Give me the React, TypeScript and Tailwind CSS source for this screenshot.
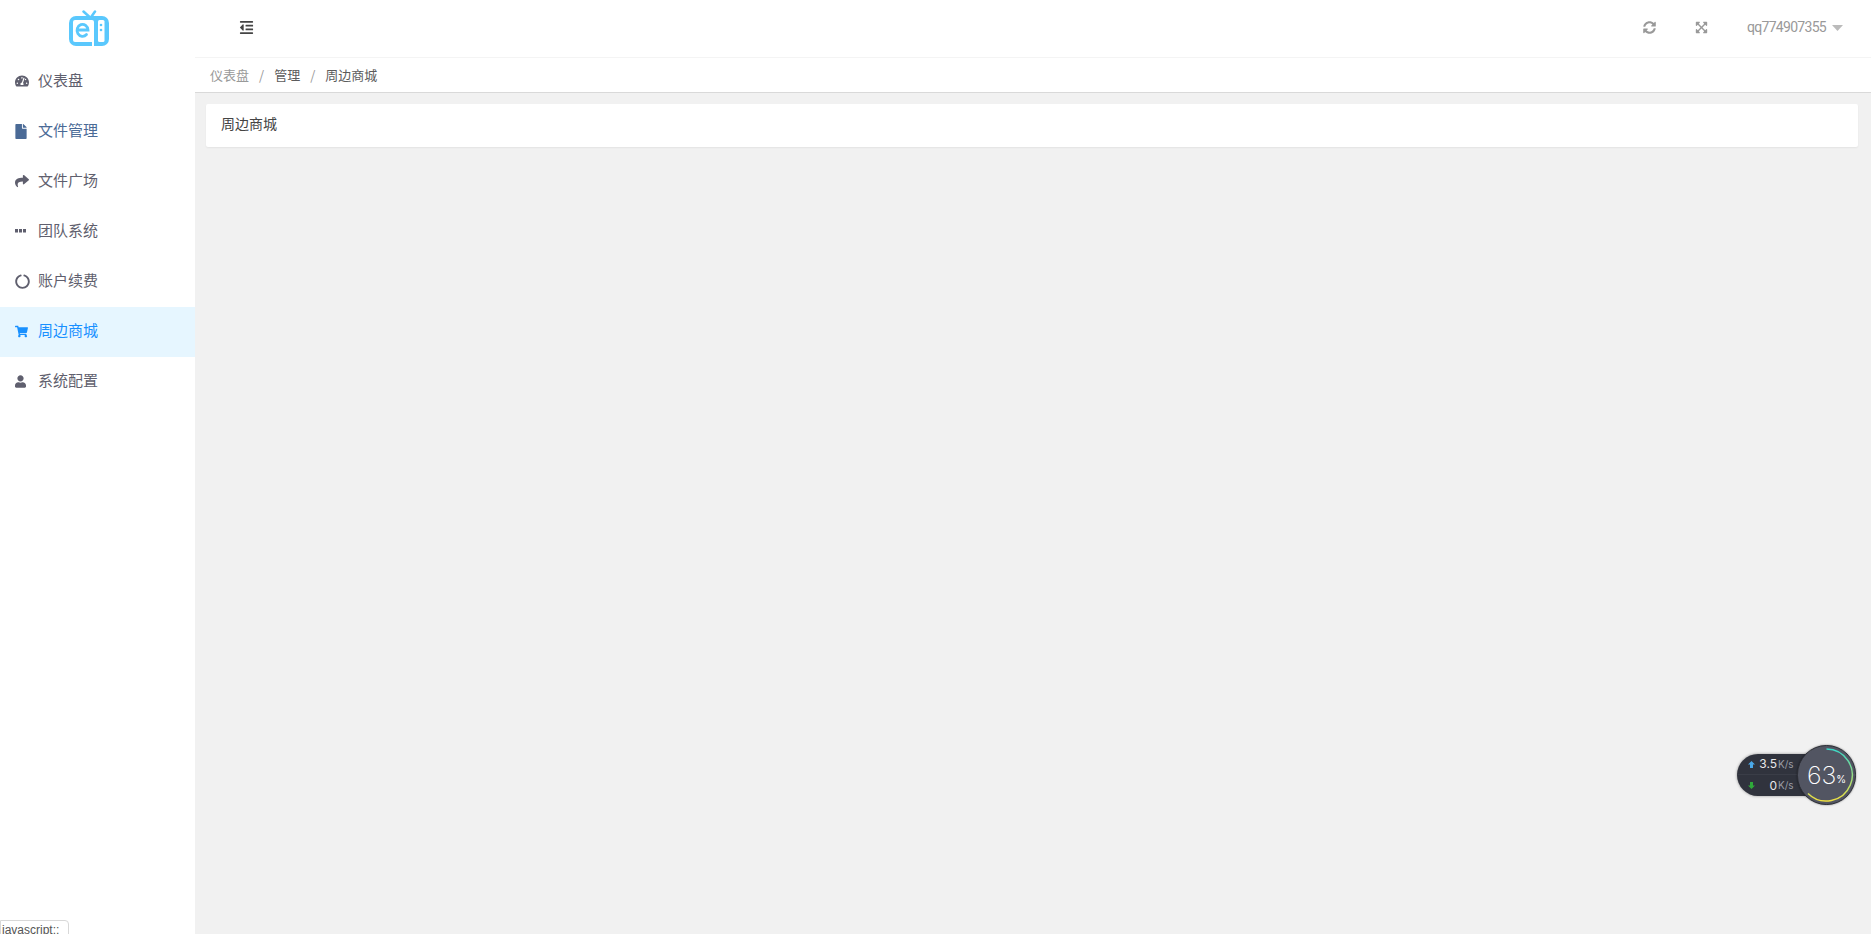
import type { ReactNode } from 'react'
import {
  FaCircleNotch,
  FaExpandArrowsAlt,
  FaFile,
  FaOutdent,
  FaShare,
  FaShoppingCart,
  FaSyncAlt,
  FaTachometerAlt,
  FaUser,
} from 'react-icons/fa'

function Dots() {
  return (
    <svg width="11" height="4" viewBox="0 0 11 4" fill="currentColor">
      <rect x="0" y="0" width="3" height="3.500" />
      <rect x="4" y="0" width="3" height="3.500" />
      <rect x="8" y="0" width="3" height="3.500" />
    </svg>
  )
}

const navItems: { label: string; icon: ReactNode; active?: boolean; blue?: boolean }[] = [
  { label: '仪表盘', icon: <FaTachometerAlt className="w-[14px] h-[14px]" /> },
  { label: '文件管理', icon: <FaFile className="w-[12px] h-[15px]" />, blue: true },
  { label: '文件广场', icon: <FaShare className="w-[14px] h-[14px]" /> },
  { label: '团队系统', icon: <Dots /> },
  { label: '账户续费', icon: <FaCircleNotch className="w-[15px] h-[15px]" /> },
  { label: '周边商城', icon: <FaShoppingCart className="w-[13px] h-[13px]" />, active: true },
  { label: '系统配置', icon: <FaUser className="w-[11px] h-[13px]" /> },
]

function Logo() {
  return (
    <svg width="40" height="36" viewBox="0 0 40 36" fill="none">
      <path d="M14.500 1.500L20 6.500M26 1.500L22.500 6.500" stroke="#5ac8fd" strokeWidth="2.500" strokeLinecap="round" />
      <rect x="0" y="6" width="40" height="30" rx="7" fill="#5ac8fd" />
      <rect x="4" y="10" width="21" height="22" rx="2" fill="#fff" />
      <rect x="23" y="30" width="2" height="6" fill="#fff" />
      <rect x="29" y="10" width="6.500" height="22" rx="1.500" fill="#fff" />
      <circle cx="32" cy="15" r="1.300" fill="#5ac8fd" />
      <circle cx="32" cy="20" r="1.300" fill="#5ac8fd" />
      <path d="M8.500 20H19A5.500 6 0 1 0 17.500 24.500" stroke="#5ac8fd" strokeWidth="2.800" strokeLinecap="round" />
    </svg>
  )
}

function ArrowUp({ className }: { className: string }) {
  return (
    <svg className={className} width="7" height="7" viewBox="0 0 7 7" fill="currentColor">
      <path d="M3.500 0L7 3.500H5V7H2V3.500H0z" />
    </svg>
  )
}

function ArrowDown({ className }: { className: string }) {
  return (
    <svg className={className} width="7" height="7" viewBox="0 0 7 7" fill="currentColor">
      <path d="M3.500 7L0 3.500H2V0H5V3.500H7z" />
    </svg>
  )
}

function SpeedWidget() {
  return (
    <div className="absolute left-[1737px] top-[745px] w-[124px] h-[62px]">
      <div className="absolute left-0 top-[9px] w-[90px] h-[42px] rounded-l-[21px] bg-[#30333d] shadow-[0_0_3px_rgba(0,0,0,0.4)] flex flex-col font-['Inter',sans-serif]">
        <div className="h-[21px] flex items-center border-b border-[#3a3d47] text-[#e8e8ea] text-[12px]">
          <ArrowUp className="ml-[11px] text-[#4aa8e8]" />
          <span className="w-[22px] text-right">3.5</span>
          <span className="ml-[1px] text-[10px] text-[#9a9da5]">K/s</span>
        </div>
        <div className="h-[21px] flex items-center text-[#e8e8ea] text-[12px]">
          <ArrowDown className="ml-[11px] text-[#2fa83a]" />
          <span className="w-[22px] text-right">0</span>
          <span className="ml-[1px] text-[10px] text-[#9a9da5]">K/s</span>
        </div>
      </div>
      <div className="absolute left-[60px] top-0 w-[59px] h-[60px] rounded-full bg-[#525562] border border-[#2c2e36] shadow-[0_0_2px_rgba(0,0,0,0.5)] flex items-center justify-center font-['Inter',sans-serif] text-white">
        <svg className="absolute inset-0" width="58" height="58" viewBox="0 0 58 58" fill="none">
          <defs>
            <linearGradient id="ring" x1="0" y1="0" x2="0" y2="1">
              <stop offset="0" stopColor="#39d8c8" />
              <stop offset="1" stopColor="#f0e040" />
            </linearGradient>
          </defs>
          <path d="M28.500 3A26 26 0 1 1 10 47.500" stroke="url(#ring)" strokeWidth="1.500" />
        </svg>
        <span className="text-[25px] font-extralight leading-none">63</span>
        <span className="text-[10px] mt-[8px] leading-none">%</span>
      </div>
    </div>
  )
}

export default function App() {
  return (
    <div className="relative flex w-full h-screen overflow-hidden bg-[#f1f1f1] font-['Noto_Sans_CJK_SC','Liberation_Sans',sans-serif]">
      <aside className="w-[195px] shrink-0 bg-white flex flex-col">
        <div className="h-[57px] flex items-start pt-[10px] pl-[69px]">
          <Logo />
        </div>
        <nav className="flex flex-col">
          {navItems.map((item) => (
            <a
              key={item.label}
              className={`h-[50px] flex items-center pb-[2px] text-[15px] ${
                item.active ? 'bg-[#e6f6ff] text-[#1890ff]' : item.blue ? 'text-[#4a6a96]' : 'text-[#5f5f6e]'
              }`}
            >
              <span className="w-[15px] ml-[15px] flex justify-start">{item.icon}</span>
              <span className="ml-[8px] pb-[2px]">{item.label}</span>
            </a>
          ))}
        </nav>
      </aside>

      <main className="flex-1 flex flex-col min-w-0">
        <header className="h-[58px] shrink-0 bg-white border-b border-[#f4f4f4] flex items-center pb-[2px]">
          <FaOutdent className="ml-[44px] w-[15px] h-[15px] text-[#444]" />
          <div className="ml-auto flex items-center text-[#999]">
            <FaSyncAlt className="w-[13px] h-[13px]" />
            <FaExpandArrowsAlt className="ml-[39px] w-[13px] h-[13px]" />
            <span className="ml-[39px] text-[14px] tracking-[-0.7px] font-['Roboto',sans-serif]">qq774907355</span>
            <svg className="ml-[6px] mr-[28px]" width="11" height="6" viewBox="0 0 11 6" fill="#bbb">
              <path d="M0 0H11L5.500 6z" />
            </svg>
          </div>
        </header>
        <div className="h-[35px] shrink-0 bg-white border-b border-[#d9d9d9] flex items-center pl-[15px] text-[13px] text-[#5c5c5c]">
          <span className="text-[#999]">仪表盘</span>
          <span className="mx-[10px] text-[#999]">/</span>
          <span>管理</span>
          <span className="mx-[10px] text-[#999]">/</span>
          <span>周边商城</span>
        </div>
        <div className="pt-[11px] pl-[11px] pr-[13px]">
          <div className="h-[43px] bg-white rounded-[2px] shadow-[0_1px_2px_rgba(0,0,0,0.06)] flex items-center pl-[15px] pb-[4px] text-[14px] text-[#444]">
            周边商城
          </div>
        </div>
      </main>

      <SpeedWidget />

      <div className="absolute left-0 top-[920px] h-[20px] w-[69px] overflow-hidden bg-white border border-[#d8d8d8] rounded-tr-[4px] pl-[1px] text-[12px] leading-[18px] text-[#555] font-['Liberation_Sans',sans-serif]">
        javascript:;
      </div>
    </div>
  )
}
